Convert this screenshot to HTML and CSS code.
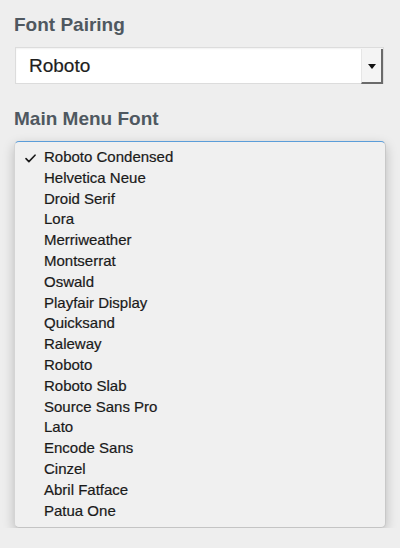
FILE: index.html
```html
<!DOCTYPE html>
<html>
<head>
<meta charset="utf-8">
<link rel="stylesheet" href="styles.css">
</head>
<body>
<div class="panel">
  <h2 class="label first">Font Pairing</h2>
  <div class="select">
    <span class="select-value">Roboto</span>
    <span class="select-btn"><span class="tri"></span></span>
  </div>
  <h2 class="label second">Main Menu Font</h2>
  <ul class="menu">
    <li class="item checked"><svg class="check" width="11" height="9" viewBox="0 0 11 9"><path d="M1 4.6 L3.9 7.6 L10 1.2" fill="none" stroke="#1a1a1a" stroke-width="1.6" stroke-linecap="round" stroke-linejoin="round"/></svg>Roboto Condensed</li>
    <li class="item">Helvetica Neue</li>
    <li class="item">Droid Serif</li>
    <li class="item">Lora</li>
    <li class="item">Merriweather</li>
    <li class="item">Montserrat</li>
    <li class="item">Oswald</li>
    <li class="item">Playfair Display</li>
    <li class="item">Quicksand</li>
    <li class="item">Raleway</li>
    <li class="item">Roboto</li>
    <li class="item">Roboto Slab</li>
    <li class="item">Source Sans Pro</li>
    <li class="item">Lato</li>
    <li class="item">Encode Sans</li>
    <li class="item">Cinzel</li>
    <li class="item">Abril Fatface</li>
    <li class="item">Patua One</li>
  </ul>
</div>
</body>
</html>
```

FILE: styles.css
```css
html, body {
  margin: 0;
  padding: 0;
  background: #eeeeee;
  font-family: "Liberation Sans", Arial, sans-serif;
}
.panel {
  padding: 13px 14px 0 14px;
}
.label {
  margin: 0;
  font-size: 19px;
  line-height: 24px;
  font-weight: bold;
  color: #4f5860;
}
.select {
  margin: 10px 1px 0 1px;
  height: 37px;
  box-sizing: border-box;
  width: 369px;
  background: #fff;
  border: 1px solid #dcdcdc;
  box-shadow: inset 0 1px 2px rgba(0,0,0,0.06);
  display: flex;
  align-items: stretch;
}
.select-value {
  flex: 1;
  display: flex;
  align-items: center;
  padding-left: 13px;
  font-size: 19px;
  color: #1e1e1e;
  -webkit-text-stroke: 0.2px #1e1e1e;
}
.select-btn {
  width: 19px;
  margin: 1px 0 -1px 0;
  background: #f4f4f4;
  border-left: 1px solid #e6e6e6;
  border-right: 2px solid #6a6a6a;
  border-bottom: 2px solid #6a6a6a;
  display: flex;
  align-items: center;
  justify-content: center;
}
.tri {
  width: 0;
  height: 0;
  border-left: 4px solid transparent;
  border-right: 4px solid transparent;
  border-top: 5px solid #111;
  margin-top: 1px;
}
.second {
  margin-top: 23px;
}
.menu {
  list-style: none;
  margin: 10px 0 0 0;
  padding: 5px 0 6px 0;
  width: 372px;
  box-sizing: border-box;
  background: #f0f0f0;
  border-top: 1px solid #5b9dd9;
  border-left: 1px solid #d4d4d4;
  border-right: 1px solid #c8c8c8;
  border-bottom: 1px solid #c4c4c4;
  border-radius: 5px;
  box-shadow: 0 4px 12px rgba(0,0,0,0.22);
}
.item {
  position: relative;
  height: 20.8px;
  line-height: 20.8px;
  padding-left: 29px;
  font-size: 15px;
  color: #1a1a1a;
  -webkit-text-stroke: 0.2px #1a1a1a;
}
.check {
  position: absolute;
  left: 10px;
  top: 7px;
}
```
